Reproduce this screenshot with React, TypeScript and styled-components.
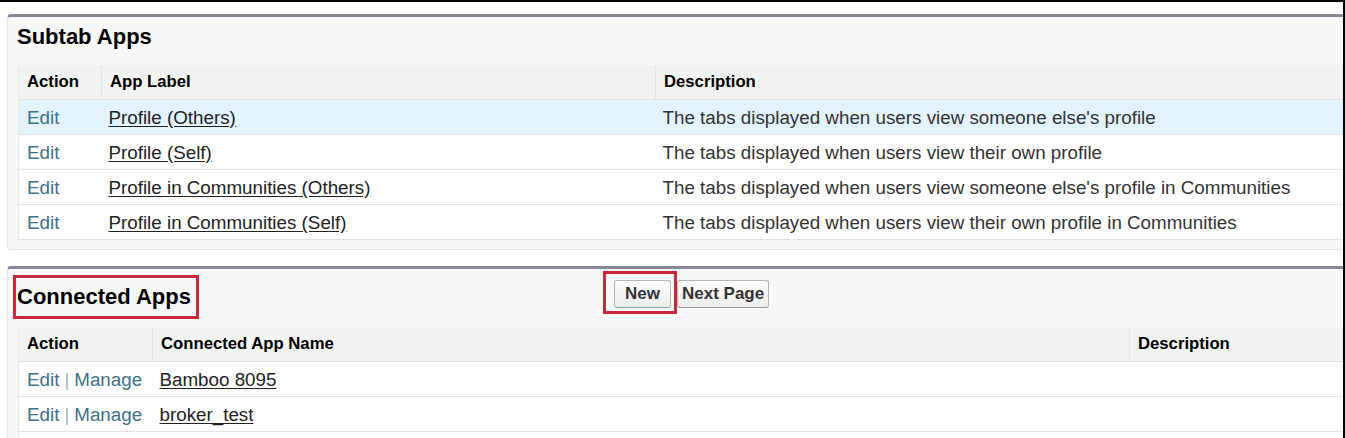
import React from 'react'
import styled, { createGlobalStyle } from 'styled-components'

const GlobalStyle = createGlobalStyle`
	html, body {
		margin: 0;
		padding: 0;
		background: #ffffff;
	}
	body {
		font-family: "Liberation Sans", Arial, sans-serif;
		color: #333;
	}
`

const Frame = styled.div`
	width: 1345px;
	height: 438px;
	box-sizing: border-box;
	border-top: 2px solid #000;
	border-right: 2px solid #000;
	overflow: hidden;
	padding: 12px 0 0 7px;
	display: flex;
	flex-direction: column;
	gap: 16px;
`

const Panel = styled.section`
	width: 1420px;
	flex-shrink: 0;
	background: #f8f8f8;
	border: 1px solid #e6e7e9;
	border-top: 3px solid #868995;
	border-radius: 4px;
	padding-bottom: 9px;
`

const TitleRow = styled.div<{ $tall?: boolean }>`
	display: flex;
	align-items: flex-start;
	padding: ${(p) => (p.$tall ? '6px 0 9px 5px' : '7px 0 15px 5px')};
`

const TitleCell = styled.div`
	width: 590px;
	flex-shrink: 0;
`

const Title = styled.h2<{ $highlight?: boolean }>`
	display: inline-block;
	margin: 0;
	font-size: 22px;
	line-height: 26px;
	font-weight: bold;
	color: #000;
	border: ${(p) => (p.$highlight ? '3px solid #c8293d' : 'none')};
	padding: ${(p) => (p.$highlight ? '6px 5px 6px 1px' : '0 0 0 4px')};
`

const Buttons = styled.div`
	display: flex;
	align-items: flex-start;
	margin-top: -4px;
`

const Marked = styled.span`
	display: inline-flex;
	border: 3px solid #c8293d;
	padding: 6px 3px 3px 8px;
`

const Button = styled.button<{ $padX: number }>`
	height: 28px;
	margin: 0;
	padding: 0 ${(p) => p.$padX}px;
	font-family: "Liberation Sans", Arial, sans-serif;
	font-size: 17px;
	font-weight: bold;
	color: #333;
	background: linear-gradient(#fdfdfd, #ececec);
	border: 1px solid #b5b5b5;
	border-bottom-color: #9a9a9a;
	border-radius: 3px;
`

const PlainButton = styled(Button)`
	margin-top: 9px;
`

const Table = styled.table`
	margin-left: 10px;
	width: 1400px;
	border-collapse: collapse;
	table-layout: fixed;
	background: #fff;
	border-left: 1px solid #e6e7e9;
`

const Head = styled.th`
	box-sizing: border-box;
	height: 34px;
	padding: 0 0 0 8px;
	text-align: left;
	font-size: 16.7px;
	font-weight: bold;
	color: #000;
	background: #f2f3f3;
	border-bottom: 1px solid #e0e3e5;
	border-left: 1px solid #e3e5e7;
	&:first-child {
		border-left: none;
	}
`

const Row = styled.tr<{ $active?: boolean }>`
	background: ${(p) => (p.$active ? '#e3f3ff' : '#ffffff')};
`

const Cell = styled.td`
	box-sizing: border-box;
	height: 35px;
	padding: 2px 0 0 7px;
	font-size: 18.8px;
	line-height: 22px;
	color: #333;
	border-bottom: 1px solid #e3e3e3;
	white-space: nowrap;
	overflow: hidden;
`

const ActionCell = styled(Cell)`
	padding-left: 8px;
`

const ActionLink = styled.a`
	color: #3f7189;
	text-decoration: none;
`

const Pipe = styled.span`
	color: #a8b4bb;
	margin: 0 5px;
`

const NameLink = styled.a`
	color: #222;
	text-decoration: underline;
	text-underline-offset: 2px;
`

const subtabs = [
	{ label: 'Profile (Others)', desc: "The tabs displayed when users view someone else's profile" },
	{ label: 'Profile (Self)', desc: 'The tabs displayed when users view their own profile' },
	{
		label: 'Profile in Communities (Others)',
		desc: "The tabs displayed when users view someone else's profile in Communities",
	},
	{
		label: 'Profile in Communities (Self)',
		desc: 'The tabs displayed when users view their own profile in Communities',
	},
]

const connected = ['Bamboo 8095', 'broker_test', '']

const App = () => {
	return (
		<>
			<GlobalStyle />
			<Frame>
				<Panel>
					<TitleRow>
						<Title>Subtab Apps</Title>
					</TitleRow>
					<Table>
						<colgroup>
							<col style={{ width: 83 }} />
							<col style={{ width: 554 }} />
							<col />
						</colgroup>
						<thead>
							<tr>
								<Head>Action</Head>
								<Head>App Label</Head>
								<Head>Description</Head>
							</tr>
						</thead>
						<tbody>
							{subtabs.map((s, i) => (
								<Row key={s.label} $active={i === 0}>
									<ActionCell>
										<ActionLink href="#">Edit</ActionLink>
									</ActionCell>
									<Cell>
										<NameLink href="#">{s.label}</NameLink>
									</Cell>
									<Cell>{s.desc}</Cell>
								</Row>
							))}
						</tbody>
					</Table>
				</Panel>

				<Panel>
					<TitleRow $tall>
						<TitleCell>
							<Title $highlight>Connected Apps</Title>
						</TitleCell>
						<Buttons>
							<Marked>
								<Button $padX={10}>New</Button>
							</Marked>
							<PlainButton $padX={4}>Next Page</PlainButton>
						</Buttons>
					</TitleRow>
					<Table>
						<colgroup>
							<col style={{ width: 134 }} />
							<col style={{ width: 977 }} />
							<col />
						</colgroup>
						<thead>
							<tr>
								<Head>Action</Head>
								<Head>Connected App Name</Head>
								<Head>Description</Head>
							</tr>
						</thead>
						<tbody>
							{connected.map((name, i) => (
								<Row key={i}>
									<ActionCell>
										{name && (
											<>
												<ActionLink href="#">Edit</ActionLink>
												<Pipe>|</Pipe>
												<ActionLink href="#">Manage</ActionLink>
											</>
										)}
									</ActionCell>
									<Cell>{name && <NameLink href="#">{name}</NameLink>}</Cell>
									<Cell />
								</Row>
							))}
						</tbody>
					</Table>
				</Panel>
			</Frame>
		</>
	)
}

export default App
